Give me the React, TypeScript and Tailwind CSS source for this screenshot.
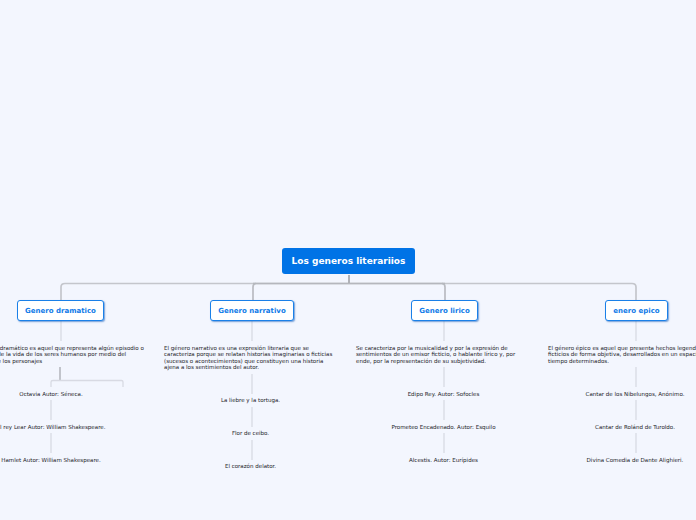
const font = "font-['DejaVu_Sans','Liberation_Sans',sans-serif]";

const branches = [
  {
    title: "Genero dramatico",
    box: "left-[17px] w-[87px]",
    para: "left-[-28px]",
    text: ["El género dramático es aquel que representa algún episodio o", "conflicto de la vida de los seres humanos por medio del", "diálogo de los personajes"],
    cx: 51,
    top: 394,
    items: ["Octavia Autor: Séneca.", "El rey Lear Autor: William Shakespeare.", "Hamlet Autor: William Shakespeare."],
  },
  {
    title: "Genero narrativo",
    box: "left-[210px] w-[84px]",
    para: "left-[164px]",
    text: ["El género narrativo es una expresión literaria que se", "caracteriza porque se relatan historias imaginarias o ficticias", "(sucesos o acontecimientos) que constituyen una historia", "ajena a los sentimientos del autor."],
    cx: 250.5,
    top: 400,
    items: ["La liebre y la tortuga.", "Flor de ceibo.", "El corazón delator."],
  },
  {
    title: "Genero lirico",
    box: "left-[411px] w-[67px]",
    para: "left-[356px]",
    text: ["Se caracteriza por la musicalidad y por la expresión de", "sentimientos de un emisor ficticio, o hablante lírico y, por", "ende, por la representación de su subjetividad."],
    cx: 443.5,
    top: 394,
    items: ["Edipo Rey. Autor: Sofocles", "Prometeo Encadenado. Autor: Esquilo", "Alcestis. Autor: Eurípides"],
  },
  {
    title: "enero epico",
    box: "left-[605px] w-[63px]",
    para: "left-[548px]",
    text: ["El género épico es aquel que presenta hechos legendarios o", "ficticios de forma objetiva, desarrollados en un espacio y", "tiempo determinados."],
    cx: 635,
    top: 394,
    items: ["Cantar de los Nibelungos, Anónimo.", "Cantar de Rolánd de Turoldo.", "Divina Comedia de Dante Alighieri."],
  },
];

function Connectors() {
  return (
    <svg className="absolute inset-0" width={696} height={520} fill="none">
      <g stroke="#c4c6cc" strokeWidth={1.7}>
        <path d="M61 300V287Q61 283.500 65 283.500H632Q636 283.500 636 287V300" />
        <path d="M253 300V287Q253 283.500 256 283.500" stroke="#b9bbc1" />
        <path d="M445 300V287Q445 283.500 442 283.500" stroke="#b9bbc1" />
        <path d="M349 275V283" stroke="#a4a6ac" />
        <path d="M253 283.500H445" stroke="#b5b7bd" />
        <path d="M60 367V380" stroke="#b9bbc2" />
      </g>
      <g stroke="#d8dae3" strokeWidth={1.3}>
        <path d="M61 321V341M252 321V341M444 321V341M636 321V341" />
        <path d="M51 387V382Q51 380.500 53 380.500H121.500Q123 380.500 123 382V387" />
        <path d="M51 400V420M51 433V453" />
        <path d="M252 374V394M252 407V427M252 440V460" />
        <path d="M444 367V387M444 400V420M444 433V453" />
        <path d="M636 367V387M636 400V420M636 433V453" />
      </g>
    </svg>
  );
}

export default function App() {
  return (
    <div className={`relative h-[520px] w-[696px] overflow-hidden bg-[#f3f6fe] ${font}`}>
      <Connectors />
      <div className="absolute left-[282px] top-[248px] flex h-[26px] w-[133px] items-center justify-center rounded-[3px] bg-[#0073e6] pt-px text-[9px] font-bold text-white">
        Los generos literariios
      </div>
      {branches.map((b) => (
        <div key={b.title}>
          <div
            className={`absolute top-[300px] flex h-[21px] items-center justify-center rounded-[3px] border border-[#1a80e8] bg-white pt-px text-[7px] font-bold text-[#0f7ae8] shadow-[1px_1px_1.5px_rgba(30,100,190,0.6)] ${b.box}`}
          >
            {b.title}
          </div>
          <div className={`absolute top-[345px] w-[170px] whitespace-nowrap text-[5.52px] leading-[6.3px] text-[#222328] ${b.para}`}>
            {b.text.map((line) => (
              <div key={line}>{line}</div>
            ))}
          </div>
          {b.items.map((item, i) => (
            <div
              key={item}
              className="absolute h-[7px] w-[180px] whitespace-nowrap text-center text-[5.52px] leading-[7px] text-[#222328]"
              style={{ left: b.cx - 90, top: b.top - 3 + i * 33 }}
            >
              {item}
            </div>
          ))}
        </div>
      ))}
    </div>
  );
}
